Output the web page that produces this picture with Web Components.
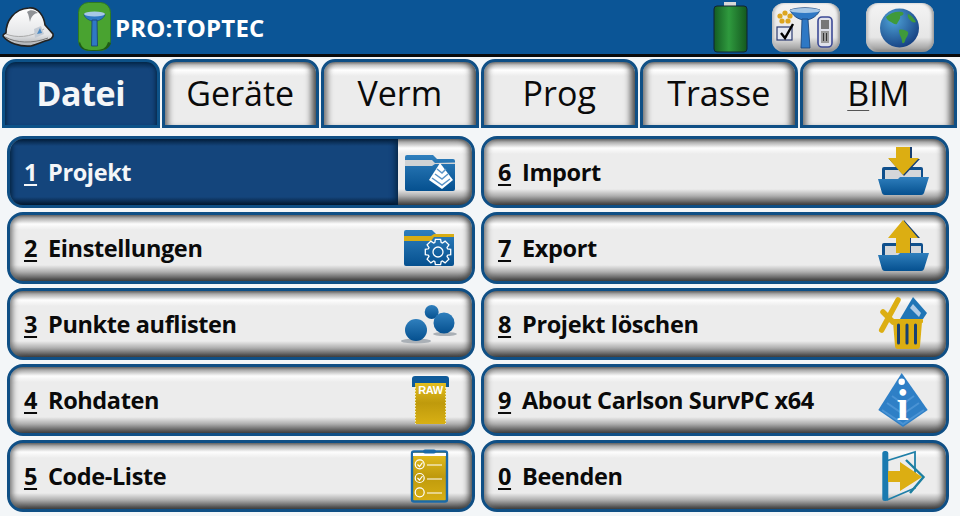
<!DOCTYPE html>
<html lang="de">
<head>
<meta charset="utf-8">
<title>SurvPC</title>
<style>
html, body { margin: 0; height: 100%; background: #f3f6f8; }
body { font-family: "Open Sans", "Liberation Sans", sans-serif; overflow: hidden; }
svg { display: block; }
u { text-decoration-thickness: 1px; text-underline-offset: 4px; text-decoration-color: #555; }
</style>
</head>
<body>
<svg width="0" height="0" style="position:absolute">
  <defs>
    <linearGradient id="blue" x1="0" y1="0" x2="0" y2="1"><stop offset="0" stop-color="#2f7fbd"/><stop offset="1" stop-color="#05508f"/></linearGradient>
    <linearGradient id="gold" x1="0" y1="0" x2="0" y2="1"><stop offset="0" stop-color="#e6c020"/><stop offset=".5" stop-color="#bf9a0c"/><stop offset="1" stop-color="#d8b014"/></linearGradient>
    <linearGradient id="batt" x1="0" y1="0" x2="1" y2="0"><stop offset="0" stop-color="#145c22"/><stop offset=".45" stop-color="#2f9a3e"/><stop offset="1" stop-color="#14581f"/></linearGradient>
    <linearGradient id="hat" x1="0" y1="0" x2="0" y2="1"><stop offset="0" stop-color="#fff"/><stop offset=".7" stop-color="#e4e5e7"/><stop offset="1" stop-color="#a9acb0"/></linearGradient>
    <radialGradient id="globe" cx=".35" cy=".3" r=".8"><stop offset="0" stop-color="#4fa3d8"/><stop offset="1" stop-color="#123a7c"/></radialGradient>
  </defs>
</svg>

<survey-app>
  <top-bar slot="bar" title-text="PRO:TOPTEC">
    <svg slot="start" width="54" height="48" viewBox="0 0 54 48">
      <path d="M4 30C4 18 12 6 27 5 36 4 42 13 43 22L51 31C52 35 48 37 43 38 38 40 34 42 29 43 18 44 6 40 1 33 1 31 2 31 4 30Z" fill="url(#hat)" stroke="#222" stroke-width="1.600"/>
      <path d="M25 9C28 6 33 7 36 10 33 10 29 13 28 19 27 15 27 12 25 9Z" fill="#8f9296"/>
      <path d="M4 31C14 35 28 35 42 26" fill="none" stroke="#aaa" stroke-width="1"/>
      <path d="M3 34C14 40 30 41 46 35" fill="none" stroke="#777" stroke-width="1"/>
      <path d="M32 26l7-3 3 8-9 4z" fill="#c4cbd4"/>
      <path d="M35 31l3-6 2 5z" fill="#4c8ac4"/>
    </svg>
    <svg slot="logo" width="34" height="50" viewBox="0 0 34 50">
      <rect x=".5" y=".5" width="32" height="48" rx="10" fill="#49a330" stroke="#2e7a22"/>
      <path d="M2 40c2 7 6 8 14 8s12-1 14-8l3 1c-1 5-6 8-17 8S1 46 1 41z" fill="#1f5c17"/>
      <path d="M6 12h21c0 3-4 6-8 7h-5c-4-1-8-4-8-7z" fill="#2f78c4" stroke="#173f73" stroke-width=".6"/>
      <ellipse cx="16.500" cy="12" rx="10.500" ry="2.500" fill="#a8c8e6"/>
      <path d="M14 18h5l.5 26h-6z" fill="#2f78c4" stroke="#173f73" stroke-width=".8"/>
    </svg>
    <svg slot="end" width="36" height="52" viewBox="0 0 36 52" style="margin-right:24px">
      <rect x="12" y="1" width="12" height="5" fill="#d8d8d8"/>
      <rect x="2" y="5" width="33" height="46" rx="3" fill="url(#batt)" stroke="#123" stroke-width="1"/>
    </svg>
    <tool-button slot="end" style="margin-right:26px">
      <svg width="68" height="49" viewBox="0 0 68 49">
        <path d="M18 7c8-3 22-3 30 0-2 5-8 10-15 10S20 12 18 7z" fill="#2f78c4" stroke="#173f73" stroke-width=".8"/>
        <ellipse cx="33" cy="7.500" rx="15" ry="2.600" fill="#a8c8e6"/>
        <path d="M30 16h6l2 29h-9z" fill="#2f78c4" stroke="#173f73" stroke-width=".8"/>
        <g fill="#dca520"><circle cx="13" cy="10" r="2.600"/><circle cx="18" cy="13" r="2.600"/><circle cx="16" cy="18" r="2.600"/><circle cx="10" cy="18" r="2.600"/><circle cx="8" cy="13" r="2.600"/></g>
        <rect x="5" y="24" width="15" height="13" fill="#e4e8f2" stroke="#2a3a70" stroke-width="1.200"/>
        <path d="M9 30l4 5 8-14" fill="none" stroke="#000" stroke-width="2.400"/>
        <rect x="46" y="14" width="14" height="30" rx="4" fill="#dfe1ea" stroke="#3c4a96" stroke-width="1.600"/>
        <rect x="49" y="17" width="8" height="9" fill="#777"/>
        <rect x="49" y="28" width="8" height="12" fill="#9a9a9a"/>
        <path d="M51.500 30v8M54.500 30v8" stroke="#333" stroke-width="1"/>
      </svg>
    </tool-button>
    <tool-button slot="end">
      <svg width="68" height="49" viewBox="0 0 68 49">
        <circle cx="33.500" cy="25" r="19.500" fill="url(#globe)"/>
        <path d="M20 14c5-5 11-6 16-5 3 1 1 4-2 4 1 3-2 5-3 8-2 1-4-1-6-2-2-1-4-2-5-5z" fill="#3f9a3a"/>
        <path d="M33 27c3-1 7 0 9 2 1 3-2 5-3 9-1 3-3 3-3 0 0-3-3-6-3-11zM42 11c3 1 6 4 8 8-2 1-4 0-5-1-2-2-4-4-3-7z" fill="#3f9a3a"/>
      </svg>
    </tool-button>
  </top-bar>

  <tab-strip slot="tabs">
    <menu-tab selected>Datei</menu-tab>
    <menu-tab>Geräte</menu-tab>
    <menu-tab>Verm</menu-tab>
    <menu-tab>Prog</menu-tab>
    <menu-tab>Trasse</menu-tab>
    <menu-tab><u>B</u>IM</menu-tab>
  </tab-strip>

  <menu-grid slot="menu">
    <menu-button num="1" selected>Projekt
      <svg slot="icon" width="74" height="66" viewBox="0 0 74 66">
        <path d="M9 16h26l4 4h16a2 2 0 0 1 2 2v28a2 2 0 0 1-2 2H9a2 2 0 0 1-2-2V18a2 2 0 0 1 2-2z" fill="url(#blue)"/>
        <path d="M7 21h27l3 3 20-.5v1.500H37l-3 2H7z" fill="#cfd2d4"/>
        <path d="M42 24l13 17-11 9-13-9z" fill="#fff"/>
        <path d="M34 39l10 7 8-6M37 35l7 5 6-5M39 30l5 4 4-4" stroke="#5a94c8" stroke-width="1.500" fill="none"/>
      </svg>
    </menu-button>
    <menu-button num="6">Import
      <svg slot="icon" width="74" height="66" viewBox="0 0 74 66">
        <path d="M12 28h37a2 2 0 0 1 2 2v12H10V30a2 2 0 0 1 2-2z" fill="#0f4f8c"/>
        <rect x="13" y="31" width="36" height="9" fill="#d5d7da"/>
        <path d="M26 8h14v12h8L32 37 17 20h9z" fill="#173f73"/>
        <path d="M24 8h14v11h9L31 36 16 19h8z" fill="#dcae12"/>
        <path d="M6 40h20l2-2h29l-5 16a3 3 0 0 1-3 2H13a3 3 0 0 1-3-2z" fill="url(#blue)"/>
      </svg>
    </menu-button>
    <menu-button num="2">Einstellungen
      <svg slot="icon" width="74" height="66" viewBox="0 0 74 66">
        <path d="M8 15h26l4 4h16a2 2 0 0 1 2 2v28a2 2 0 0 1-2 2H8a2 2 0 0 1-2-2V17a2 2 0 0 1 2-2z" fill="url(#blue)"/>
        <path d="M6 21h27l3-2h20v3H36l-3 4H6z" fill="#d8ad14"/>
        <path id="gear" fill="none" stroke="#fff" stroke-width="1.300"/>
        <circle cx="40" cy="37" r="5" fill="none" stroke="#fff" stroke-width="1.300"/>
      </svg>
    </menu-button>
    <menu-button num="7">Export
      <svg slot="icon" width="74" height="66" viewBox="0 0 74 66">
        <path d="M12 28h37a2 2 0 0 1 2 2v12H10V30a2 2 0 0 1 2-2z" fill="#0f4f8c"/>
        <rect x="13" y="31" width="36" height="9" fill="#d5d7da"/>
        <path d="M32 5l16 18h-9v15H26V23z" fill="#173f73"/>
        <path d="M31 5l15 18h-8v15H24V23h-8z" fill="#dcae12"/>
        <path d="M6 40h20l2-2h29l-5 16a3 3 0 0 1-3 2H13a3 3 0 0 1-3-2z" fill="url(#blue)"/>
      </svg>
    </menu-button>
    <menu-button num="3">Punkte auflisten
      <svg slot="icon" width="74" height="66" viewBox="0 0 74 66">
        <ellipse cx="18" cy="50" rx="15" ry="2.500" fill="#aab0b6"/>
        <ellipse cx="47" cy="43" rx="12" ry="2" fill="#aab0b6"/>
        <circle cx="18" cy="39" r="11" fill="url(#blue)"/>
        <circle cx="33.700" cy="21" r="7" fill="url(#blue)"/>
        <circle cx="46" cy="32" r="10.500" fill="url(#blue)"/>
      </svg>
    </menu-button>
    <menu-button num="8">Projekt löschen
      <svg slot="icon" width="74" height="66" viewBox="0 0 74 66">
        <path d="M9.700 39L26 9M11 21l10 10" fill="none" stroke="#dcae12" stroke-width="5.500" stroke-linecap="round"/>
        <path d="M28 28L41 6l14 16-4 6z" fill="#1f75b6"/>
        <path d="M41 13l8 9-2 4-9-9z" fill="#aecbe6"/>
        <rect x="20" y="28" width="31" height="4" rx="1" fill="#dcae12"/>
        <path d="M21 31h29l-2 24a3 3 0 0 1-3 3H26a3 3 0 0 1-3-3z" fill="#dcae12"/>
        <path d="M26.500 34v18M35 34v18M43.500 34v18" stroke="#173f73" stroke-width="3" stroke-linecap="round"/>
      </svg>
    </menu-button>
    <menu-button num="4">Rohdaten
      <svg slot="icon" width="74" height="66" viewBox="0 0 74 66">
        <rect x="17" y="15" width="31" height="42" fill="url(#gold)"/>
        <path d="M17.500 20v37M47.500 20v37" stroke="#f5eeb0" stroke-width="1" stroke-dasharray="1.500 1.500"/>
        <path d="M14 20v-8a3 3 0 0 1 3-3h31a3 3 0 0 1 3 3v8h-3v-4H17v4z" fill="#0f5a99"/>
        <text x="32.500" y="27" text-anchor="middle" font-family="Liberation Sans, sans-serif" font-size="11" font-weight="700" fill="#fff">RAW</text>
      </svg>
    </menu-button>
    <menu-button num="9">About Carlson SurvPC x64
      <svg slot="icon" width="74" height="66" viewBox="0 0 74 66">
        <path d="M29.700 6L55.700 43 31 60 6.300 43z" fill="#2e7fc6"/>
        <path d="M10 43l21 14 21-14M15 36l16 11 16-11M20 29l11 8 11-8" fill="none" stroke="#4a93d4" stroke-width="2"/>
        <circle cx="29.700" cy="14.700" r="3.200" fill="#fff"/>
        <text x="30.500" y="53" text-anchor="middle" font-family="Liberation Serif, serif" font-size="44" font-weight="700" fill="#fff">i</text>
      </svg>
    </menu-button>
    <menu-button num="5">Code-Liste
      <svg slot="icon" width="74" height="66" viewBox="0 0 74 66">
        <rect x="14" y="8.500" width="35" height="50" rx="2" fill="url(#gold)" stroke="#1a6aa8" stroke-width="2.400"/>
        <rect x="15" y="10" width="33" height="3" fill="#fff"/>
        <rect x="25" y="6.500" width="13" height="4" rx="2" fill="#1a6aa8"/>
        <g fill="none" stroke="#fff" stroke-width="1.200">
          <circle cx="21.700" cy="21.300" r="4.500"/><circle cx="21.700" cy="35" r="4.500"/><circle cx="21.700" cy="49.300" r="4.500"/>
          <path d="M29 22h15M29 36h15M29 50h15M19.500 21.500l2 2 3-4M19.500 35l2 2 3-4"/>
        </g>
      </svg>
    </menu-button>
    <menu-button num="0">Beenden
      <svg slot="icon" width="74" height="66" viewBox="0 0 74 66">
        <path d="M14 18l29-9v26M43 44v1L15 57" fill="none" stroke="#1f7fa8" stroke-width="1.800"/>
        <rect x="10.300" y="8" width="6" height="50" rx="2.500" fill="#1a7ab0"/>
        <path d="M16 28h12v-9l22 15-22 14v-9H16z" fill="#dcae12"/>
        <path d="M34 17l17.500 17L38 50" fill="none" stroke="#1c7fa0" stroke-width="2.400"/>
      </svg>
    </menu-button>
  </menu-grid>
</survey-app>

<script>
function shadow(host, html) {
    const root = host.attachShadow({ mode: 'open' });
    root.innerHTML = html;
    return root;
}

// outline of the gear in the settings folder
function gearPath(cx, cy, teeth, outer, inner) {
    const step = Math.PI * 2 / teeth;
    let d = '';
    for (let i = 0; i < teeth; i++) {
        const a = i * step;
        [[inner, -.32], [outer, -.2], [outer, .2], [inner, .32]].forEach(([r, t]) => {
            const x = cx + r * Math.cos(a + t * step * 1.3), y = cy + r * Math.sin(a + t * step * 1.3);
            d += (d ? 'L' : 'M') + x.toFixed(1) + ' ' + y.toFixed(1);
        });
    }
    return d + 'Z';
}
document.getElementById('gear').setAttribute('d', gearPath(40, 37, 8, 13, 10));

class SurveyApp extends HTMLElement {
    constructor() {
        super();
        shadow(this, `
<style>
:host { display: flex; flex-direction: column; height: 516px; }
</style>
<slot name="bar"></slot>
<slot name="tabs"></slot>
<slot name="menu"></slot>`);
    }
}

class TopBar extends HTMLElement {
    constructor() {
        super();
        const root = shadow(this, `
<style>
:host {
    display: flex;
    align-items: center;
    box-sizing: border-box;
    height: 57px;
    padding: 0 26px 0 2px;
    background: #0b5596;
    border-bottom: 3px solid #0a0a0a;
    color: #fff;
}
.start { display: flex; width: 76px; }
.logo { display: flex; margin-right: 3px; }
#title { font-size: 24px; font-weight: 700; white-space: nowrap; letter-spacing: .2px; }
.end { display: flex; align-items: center; margin-left: auto; }
</style>
<div class="start"><slot name="start"></slot></div>
<div class="logo"><slot name="logo"></slot></div>
<span id="title"></span>
<div class="end"><slot name="end"></slot></div>`);
        root.querySelector('#title').textContent = this.getAttribute('title-text');
    }
}

class ToolButton extends HTMLElement {
    constructor() {
        super();
        shadow(this, `
<style>
:host {
    display: block;
    width: 68px;
    height: 49px;
    border-radius: 12px;
    background: linear-gradient(#f4f4f4, #e6e6e6 70%, #a8a8a8 92%, #7e7e7e);
    box-shadow: inset -3px 0 3px -1px #999, inset 3px 0 3px -1px #bbb;
}
</style>
<slot></slot>`);
    }
}

class TabStrip extends HTMLElement {
    constructor() {
        super();
        shadow(this, `
<style>
:host {
    display: grid;
    grid-template-columns: repeat(6, 1fr);
    gap: 2px;
    height: 69px;
    padding: 2px 3px 0 2px;
}
</style>
<slot></slot>`);
    }
}

class MenuTab extends HTMLElement {
    constructor() {
        super();
        shadow(this, `
<style>
:host {
    display: flex;
    align-items: center;
    justify-content: center;
    box-sizing: border-box;
    border: 3px solid #0f4f85;
    border-radius: 14px 14px 0 0;
    background: linear-gradient(#777 0, #c4c4c4 3px, #fff 8px, #ececec 14px);
    box-shadow: inset 8px 0 6px -5px #6a6a6a, inset -9px 0 7px -5px #444;
    font-size: 34px;
    color: #0a0a0a;
    padding-bottom: 2px;
}
:host([selected]) {
    background: linear-gradient(#05294c 0, #14457c 7px);
    border-color: #0d5288;
    box-shadow: inset 5px 0 5px -4px #04223f, inset -5px 0 5px -4px #04223f;
    color: #f4f6f8;
    font-weight: 700;
    letter-spacing: -.4px;
}
</style>
<slot></slot>`);
    }
}

class MenuGrid extends HTMLElement {
    constructor() {
        super();
        shadow(this, `
<style>
:host {
    display: grid;
    grid-template-columns: 468px 468px;
    grid-auto-rows: 72px;
    gap: 4px 6px;
    padding: 8px 0 0 7px;
}
</style>
<slot></slot>`);
    }
}

class MenuButton extends HTMLElement {
    constructor() {
        super();
        const root = shadow(this, `
<style>
:host {
    display: flex;
    align-items: center;
    box-sizing: border-box;
    border: 3px solid #0f4f85;
    border-radius: 16px;
    background: linear-gradient(#666 0, #aaa 3px, #fdfdfd 9px, #ececec 15px, #ececec 50px, #aeaeae 57px, #3c3c3c 66px);
    box-shadow: inset 7px 0 6px -5px #666, inset -8px 0 6px -5px #444;
    font-size: 23.5px;
    letter-spacing: -.38px;
    font-weight: 700;
    color: #0a0a0a;
    overflow: hidden;
}
.label {
    flex: 1;
    align-self: stretch;
    display: flex;
    align-items: center;
    padding-left: 14px;
    padding-bottom: 1px;
    white-space: nowrap;
}
#num {
    width: 24px;
    flex: none;
    text-decoration: underline;
    text-decoration-thickness: 2px;
    text-underline-offset: 3px;
}
.icon { flex: none; width: 74px; height: 66px; }
:host([selected]) { box-shadow: inset -8px 0 6px -5px #444; }
:host([selected]) .label {
    background: linear-gradient(#041f3c 0, #14457c 7px, #14457c 58px, #03192f 66px);
    color: #f4f6f8;
    box-shadow: inset 6px 0 5px -4px #04223f, inset -7px 0 6px -5px #04223f;
}
</style>
<div class="label"><span id="num"></span><slot></slot></div>
<div class="icon"><slot name="icon"></slot></div>`);
        root.querySelector('#num').textContent = this.getAttribute('num');
    }
}

customElements.define('survey-app', SurveyApp);
customElements.define('top-bar', TopBar);
customElements.define('tool-button', ToolButton);
customElements.define('tab-strip', TabStrip);
customElements.define('menu-tab', MenuTab);
customElements.define('menu-grid', MenuGrid);
customElements.define('menu-button', MenuButton);
</script>
</body>
</html>
